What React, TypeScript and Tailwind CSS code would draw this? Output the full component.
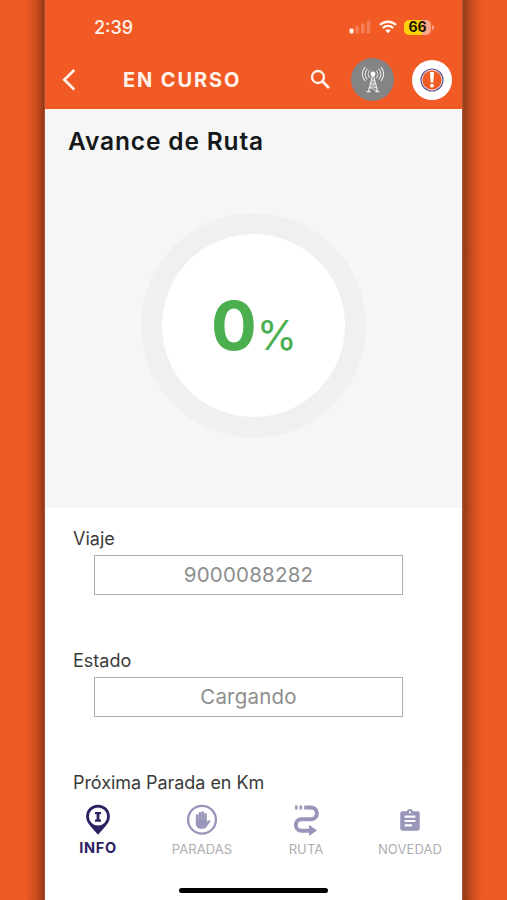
import type { ReactNode } from 'react'

const FONT = 'font-[Inter,"Liberation_Sans",sans-serif]'

function StatusBar() {
  return (
    <div className="flex h-[54px] items-center pl-[49px] pr-[28px] text-[#fff3ec]">
      <span className="pt-[2px] text-[18px] font-medium leading-none">2:39</span>
      <svg className="ml-auto" width="22" height="14" viewBox="0 0 22 14">
        <rect x="0.5" y="8.5" width="4" height="5" rx="1" fill="currentColor" />
        <g fill="#fff" opacity="0.22">
          <rect x="6.3" y="6" width="3.6" height="7.5" rx="1" />
          <rect x="12" y="3.5" width="3.6" height="10" rx="1" />
          <rect x="17.7" y="0.5" width="3.6" height="13" rx="1" />
        </g>
      </svg>
      <svg className="ml-[8px]" width="18" height="14" viewBox="0 0 19 14" fill="none" stroke="currentColor" strokeWidth="2.4">
        <path d="M1 4.9a12.2 12.2 0 0 1 17 0" />
        <path d="M4 8.2a7.8 7.8 0 0 1 11 0" />
        <path d="M6.6 10.7a4.2 4.2 0 0 1 5.8 0L9.5 13.7z" fill="currentColor" stroke="none" />
      </svg>
      <div className="ml-[7px] flex h-[15px] w-[27px] items-center justify-center rounded-[5px] bg-[linear-gradient(90deg,#fdd20a_66%,#f9a68a_66%)] text-[14px] font-bold leading-none text-[#1d1500]">
        66
      </div>
      <span className="ml-px h-[5px] w-[2px] rounded-r-full bg-[#f9a68a]" />
    </div>
  )
}

function AntennaIcon() {
  return (
    <svg width="22" height="28" viewBox="0 0 24 30" fill="none" stroke="#ececec" strokeWidth="1.1" strokeLinecap="round">
      <circle cx="12" cy="8.5" r="2.7" fill="#fff" stroke="none" />
      <path d="M8.2 4.9a5.2 5.2 0 0 0 0 7.2M5.6 3a8 8 0 0 0 0 11M3.2 1.2a11 11 0 0 0 0 14.5" />
      <path d="M15.8 4.9a5.2 5.2 0 0 1 0 7.2M18.4 3a8 8 0 0 1 0 11M20.8 1.2a11 11 0 0 1 0 14.5" />
      <path d="M11.2 11L7 27.5M12.8 11L17 27.5M5.5 27.7h3.4M15.1 27.7h3.4" strokeWidth="1.3" />
      <path d="M10.4 15h3.2M9.4 19h5.2M8.3 23.3h7.4M10.4 15l4.2 4M14.6 19l-6.3 4.3M8.3 23.3l8 3.4M13.6 15l-4.2 4M9.4 19l6.3 4.3" strokeWidth="0.8" />
    </svg>
  )
}

function Header() {
  return (
    <div className="flex h-[55px] items-center pb-[4px] pl-[17px] pr-[10px] text-[#fff3ec]">
      <svg width="15" height="24" viewBox="0 0 15 24" fill="none" stroke="currentColor" strokeWidth="2.7">
        <path d="M12.3 2L2.3 11.8L12.3 21.5" />
      </svg>
      <h1 className="ml-[46px] text-[20px] font-bold leading-none tracking-[1.9px]">EN CURSO</h1>
      <svg className="ml-auto" width="21" height="21" viewBox="0 0 21 21" fill="none" stroke="currentColor" strokeWidth="2.3">
        <circle cx="8" cy="8" r="6" />
        <path d="M12.3 12.3L19 19" strokeWidth="2.8" />
      </svg>
      <div className="ml-[20px] flex size-[43px] items-center justify-center rounded-full bg-[#848484]">
        <AntennaIcon />
      </div>
      <div className="ml-[18px] flex size-[40px] items-center justify-center rounded-full bg-white">
        <svg width="24" height="24" viewBox="0 0 24 24">
          <circle cx="12" cy="12" r="11.6" fill="#625c98" />
          <circle cx="12" cy="12" r="10.4" fill="#fbe3dc" />
          <circle cx="12" cy="12" r="9.6" fill="#f15a24" />
          <path d="M9.9 4h4.2l-.8 10.6h-2.6z" fill="#fff" />
          <circle cx="12" cy="17.7" r="1.9" fill="#fff" />
        </svg>
      </div>
    </div>
  )
}

function Field({ label, value }: { label: string; value: string }) {
  return (
    <div className="h-[122px] pl-[28px] pr-[59px]">
      <label className="block text-[18px] leading-[22px] text-[#3a3a3a]">{label}</label>
      <div className="ml-[21px] mt-[5px] flex h-[40px] items-center justify-center border border-[#acacac] pt-px text-[20.5px] tracking-[0.2px] text-[#8e8e8e]">
        {value}
      </div>
    </div>
  )
}

function Tab({ label, active, children }: { label: string; active?: boolean; children: ReactNode }) {
  return (
    <button className={`flex w-[104px] flex-col items-center ${active ? 'text-[#2b2262]' : 'text-[#9896b9]'}`}>
      <span className="flex h-[32px] items-center">{children}</span>
      {active ? (
        <span className="mt-[3px] text-[14.5px] font-bold leading-[17px] tracking-[0.7px]">{label}</span>
      ) : (
        <span className="mt-[5px] text-[13px] leading-[17px] tracking-[0.1px] text-[#adadb2]">{label}</span>
      )}
    </button>
  )
}

function TabBar() {
  return (
    <nav className="flex pl-px pt-px">
      <Tab label="INFO" active>
        <svg width="26" height="32" viewBox="0 0 26 32">
          <path fillRule="evenodd" d="M13 .8C6.2.8 1.1 5.8 1.1 12.4c0 4 2 7 4.8 10.3L13 30.8l7.1-8.1c2.8-3.3 4.8-6.3 4.8-10.3C24.9 5.8 19.8.8 13 .8zM13 3.4a9.1 9.1 0 1 1 0 18.2a9.1 9.1 0 0 1 0-18.2z" fill="currentColor" />
          <path d="M10 8h6v2.2h-1.6v5.4H16v2.2h-6v-2.2h1.6v-5.4H10z" fill="currentColor" />
        </svg>
      </Tab>
      <Tab label="PARADAS">
        <svg width="32" height="32" viewBox="0 0 32 32">
          <circle cx="16" cy="15.7" r="13.9" fill="none" stroke="currentColor" strokeWidth="2.3" />
          <g stroke="currentColor" strokeWidth="2.6" strokeLinecap="round">
            <path d="M11.1 11.5v8M13.9 9.3v9M16.7 8.5v9M19.5 10.2v8" />
          </g>
          <path d="M9.9 16h10.8v2l1.8-1.5c.8-.7 2.4-.1 1.8 1l-3.4 5c-1 1.6-2.6 2.3-4.9 2.3c-4 0-6.1-2-6.1-5z" fill="currentColor" />
        </svg>
      </Tab>
      <Tab label="RUTA">
        <svg width="26" height="32" viewBox="0 0 26 32">
          <path d="M2 1.5h2.6v4H2zM6.5 1.5h2.6v4H6.5z" fill="currentColor" />
          <path d="M11.2 3.5h6.8a5.6 5.6 0 0 1 0 11.8H8.5a5.7 5.7 0 0 0 0 11.4h9" fill="none" stroke="currentColor" strokeWidth="3.9" />
          <path d="M16 20.8L24 26.4L16 32z" fill="currentColor" />
        </svg>
      </Tab>
      <Tab label="NOVEDAD">
        <svg className="mt-px" width="26" height="26" viewBox="0 0 24 24" fill="currentColor">
          <path d="M19 3h-4.18C14.4 1.84 13.3 1 12 1c-1.3 0-2.4.84-2.82 2H5c-1.1 0-2 .9-2 2v14c0 1.1.9 2 2 2h14c1.1 0 2-.9 2-2V5c0-1.1-.9-2-2-2zm-7 0c.55 0 1 .45 1 1s-.45 1-1 1-1-.45-1-1 .45-1 1-1zm2 14H7v-2h7v2zm3-4H7v-2h10v2zm0-4H7V7h10v2z" />
        </svg>
      </Tab>
    </nav>
  )
}

export default function App() {
  return (
    <div className={`flex h-[900px] w-[507px] overflow-hidden bg-[#ee5c24] ${FONT}`}>
      <div className="w-[45px] shrink-0 bg-[linear-gradient(90deg,#ee5c24_57%,#c94c1d_82%,#973a17_97%,#b3603f)]" />
      <main className="flex w-[417px] shrink-0 flex-col bg-white">
        <header className="h-[109px] bg-[#f15a24]">
          <StatusBar />
          <Header />
        </header>

        <section className="flex h-[399px] flex-col items-center bg-[#f6f6f6]">
          <h2 className="w-full pl-[23px] pt-[17px] text-[24.5px] font-semibold leading-[30px] tracking-[0.85px] text-[#15181b]">
            Avance de Ruta
          </h2>
          <div className="mr-px mt-[57px] flex size-[225px] items-center justify-center rounded-full border-[21px] border-[#f0f0f0] bg-white">
            <div className="flex items-baseline pb-[2px] pl-[2px] text-[#4bae4f]">
              <span className="text-[68px] font-bold leading-none">0</span>
              <span className="text-[41px] leading-none">%</span>
            </div>
          </div>
        </section>

        <section className="h-[295px] overflow-hidden pt-[20px]">
          <Field label="Viaje" value="9000088282" />
          <Field label="Estado" value="Cargando" />
          <p className="pl-[28px] text-[18px] leading-[22px] tracking-[-0.05px] text-[#3a3a3a]">Próxima Parada en Km</p>
        </section>

        <TabBar />
        <div className="mx-auto mb-[7px] mt-auto h-[5px] w-[149px] rounded-full bg-black" />
      </main>
      <div className="flex-1 bg-[linear-gradient(90deg,#b3603f,#973a17_4%,#c94c1d_22%,#ee5c24_45%)]" />
    </div>
  )
}
